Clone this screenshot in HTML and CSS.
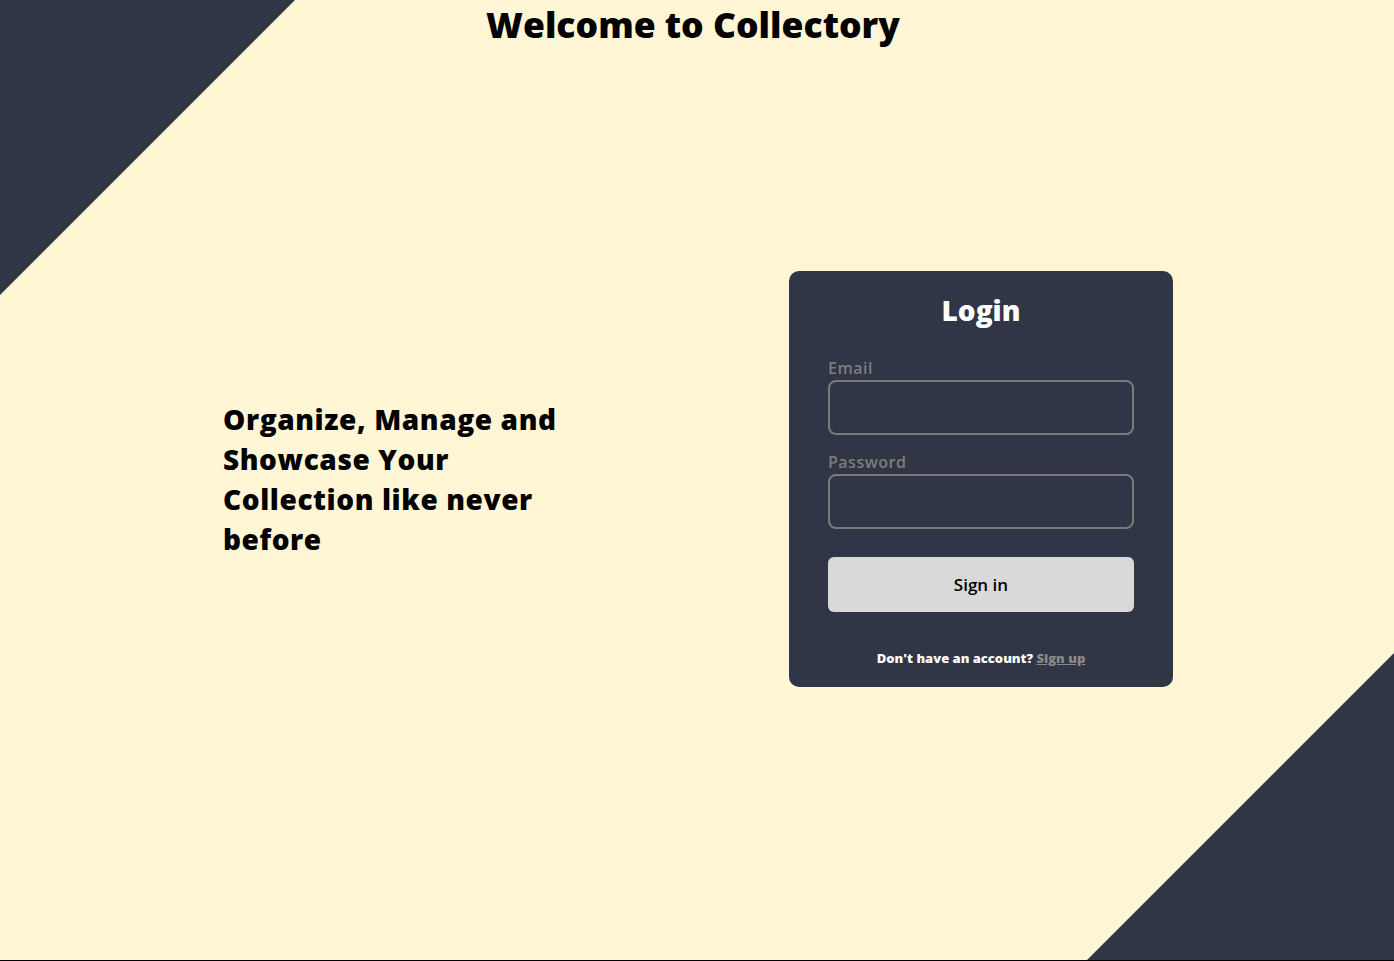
FILE: index.html
```html
<!DOCTYPE html>
<html lang="en">
<head>
<meta charset="utf-8">
<title>Collectory</title>
<link rel="stylesheet" href="styles.css">
</head>
<body>
<div class="page">
  <div class="tri tri-tl"></div>
  <div class="tri tri-br"></div>
  <h1 class="title">Welcome to Collectory</h1>
  <main class="content">
    <section class="hero">
      <h2 class="tagline">Organize, Manage and Showcase Your Collection like never before</h2>
    </section>
    <section class="card">
      <h2 class="card-title">Login</h2>
      <form class="form">
        <label class="field">
          <span class="label">Email</span>
          <input class="input" type="email">
        </label>
        <label class="field">
          <span class="label">Password</span>
          <input class="input" type="password">
        </label>
        <button class="btn" type="button">Sign in</button>
      </form>
      <p class="footer">Don't have an account? <a class="link" href="#">Sign up</a></p>
    </section>
  </main>
</div>
</body>
</html>
```

FILE: styles.css
```css
html, body {
  margin: 0;
  padding: 0;
  background: #000;
}
body {
  font-family: "Open Sans", "Liberation Sans", sans-serif;
}
.page {
  position: relative;
  height: 960px;
  overflow: hidden;
  background: #fff6d6;
  display: grid;
  grid-template: 1fr / 1fr;
}
.tri {
  position: absolute;
  background: #313646;
}
.tri-tl {
  left: 0;
  top: 0;
  width: 295px;
  height: 295px;
  clip-path: polygon(0 0, 100% 0, 0 100%);
}
.tri-br {
  right: 0;
  bottom: 0;
  width: 307px;
  height: 307px;
  clip-path: polygon(100% 0, 100% 100%, 0 100%);
}
.title {
  grid-area: 1 / 1;
  align-self: start;
  justify-self: center;
  position: relative;
  margin: 0 8px 0 0;
  font-size: 35.5px;
  line-height: 48px;
  font-weight: 800;
  color: #000;
}
.content {
  grid-area: 1 / 1;
  position: relative;
  display: flex;
  align-items: center;
  justify-content: center;
  gap: 226px;
  padding: 0 0 2px 2px;
}
.hero {
  width: 340px;
}
.tagline {
  margin: 0;
  font-size: 28px;
  line-height: 40px;
  font-weight: 800;
  letter-spacing: 0.6px;
  color: #000;
}
.card {
  width: 384px;
  box-sizing: border-box;
  padding: 18px 39px 19px;
  background: #313646;
  border-radius: 10px;
  color: #fff;
}
.card-title {
  margin: 0;
  text-align: center;
  font-size: 28px;
  line-height: 42px;
  font-weight: 800;
}
.form {
  display: flex;
  flex-direction: column;
  margin-top: 25px;
}
.field {
  display: flex;
  flex-direction: column;
  margin-bottom: 15px;
}
.label {
  font-size: 16px;
  line-height: 24px;
  font-weight: 600;
  letter-spacing: 0.5px;
  color: #7d7d7d;
}
.input {
  height: 55px;
  box-sizing: border-box;
  border: 2px solid #7a7a7a;
  border-radius: 8px;
  background: transparent;
  outline: none;
  color: #fff;
}
.btn {
  margin-top: 13px;
  height: 55px;
  border: none;
  border-radius: 6px;
  background: #d9d9d9;
  color: #000;
  font-family: inherit;
  font-size: 17px;
  font-weight: 600;
}
.footer {
  margin: 36px 0 0;
  text-align: center;
  font-size: 13px;
  line-height: 20px;
  font-weight: 800;
}
.link {
  color: #8a8a8a;
  text-decoration: underline;
}
```
